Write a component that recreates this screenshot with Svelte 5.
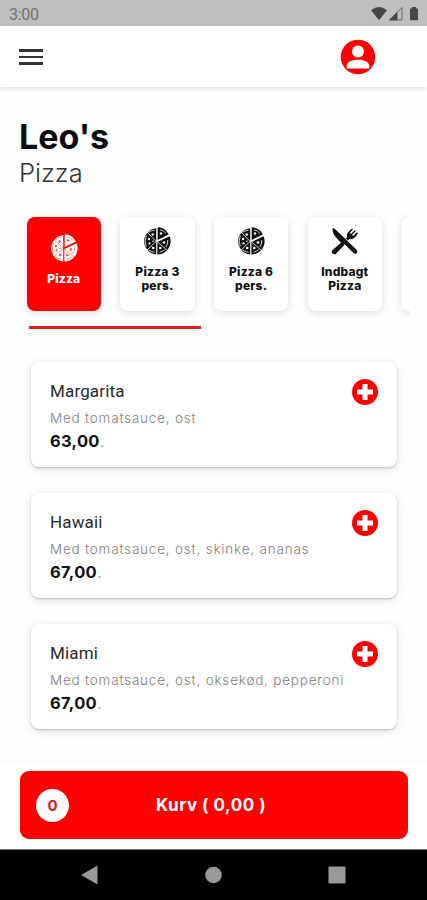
<script>
  const tabs = [
    { lines: ['Pizza'], icon: 'pizza', active: true },
    { lines: ['Pizza 3', 'pers.'], icon: 'pizza' },
    { lines: ['Pizza 6', 'pers.'], icon: 'pizza' },
    { lines: ['Indbagt', 'Pizza'], icon: 'cutlery' },
    { lines: [], icon: 'none' }
  ];
  const items = [
    { name: 'Margarita', text: 'Med tomatsauce, ost', price: '63,00' },
    { name: 'Hawaii', text: 'Med tomatsauce, ost, skinke, ananas', price: '67,00' },
    { name: 'Miami', text: 'Med tomatsauce, ost, oksekød, pepperoni', price: '67,00' }
  ];
</script>

<div class="screen">
  <div class="status">
    <span class="clock">3:00</span>
    <svg width="50" height="16" viewBox="0 0 50 16">
      <path d="M1 4.200Q9 -2.400 17 4.200L9 14.200Z" fill="#474747" />
      <path d="M19.500 14L32 1.500V14Z" fill="none" stroke="#666" stroke-width="1" />
      <path d="M19 14.300L27.500 5.800V14.300Z" fill="#474747" />
      <path d="M40 2.500H42V1H46V2.500H48V14.300H40Z" fill="#474747" />
    </svg>
  </div>

  <header>
    <div class="menu"><i></i><i></i><i></i></div>
    <svg class="user" width="36" height="36" viewBox="0 0 36 36">
      <circle cx="18" cy="18" r="17.3" fill="#f00" />
      <circle cx="18" cy="12.500" r="6" fill="#fff" />
      <path d="M6.700 29.500V26.500C7.500 22.200 13 20.700 18 20.700S28.500 22.200 29.300 26.500V29.500Z" fill="#fff" />
    </svg>
  </header>

  <main>
    <h1>Leo's</h1>
    <h2>Pizza</h2>

    <div class="tabs">
      {#each tabs as tab}
        <div class="tab" class:active={tab.active}>
          {#if tab.icon === 'pizza'}
            <svg width="28" height="28" viewBox="0 0 28 28">
              <g fill="currentColor">
                <path d="M13.200 1.200A13.200 13.200 0 0 0 13.200 27.500Z" />
                <path d="M14.400 15L26.600 9.200A13.200 13.200 0 0 1 14.400 27.500Z" />
                <path d="M14.700 13V.3A13.200 13.200 0 0 1 25.800 7.500Z" />
              </g>
              <g class="cut" fill="none">
                <path d="M13 14.300L4 5M13 14.500L3.500 23.500M14.500 15L24 23M3.400 8.500Q1 14 3.200 19.500M5.500 5.300Q8 3.500 11.500 3.200M5.500 23Q8 25 11.500 25.200M24.800 13Q25 17 23 20M16.500 25.300Q19.500 24.500 21.500 22.800M17 2.800Q21 3.500 23 6.500" />
              </g>
              <g class="dots">
                <circle cx="9.700" cy="7.500" r="1.200" /><circle cx="6" cy="12" r="1.200" />
                <circle cx="6.500" cy="16.400" r="1.100" /><circle cx="10.200" cy="21" r="1.300" />
                <circle cx="21" cy="15.500" r="1.300" /><circle cx="17.300" cy="21" r="1.300" />
                <circle cx="18" cy="6.500" r="1.200" /><circle cx="10" cy="14.200" r=".8" />
              </g>
            </svg>
          {:else if tab.icon === 'cutlery'}
            <svg width="28" height="28" viewBox="0 0 28 28" fill="currentColor">
              <path d="M1.500 2.500C1 1 2.500 .8 4 2L15 12.500L17 14.500L26 23.300Q27 25 25.500 26.300Q24 27.500 22.500 26L14 17.500H11.500L3 8Q1.500 5 1.500 2.500Z" />
              <path d="M1.300 23.300L10.500 15.200L13.300 18L5 26.700Q3.300 28.200 1.600 26.600Q0 25 1.300 23.300Z" />
              <path d="M14.800 11.500L16.200 10C15 7 17.500 4.500 21 1.500L22 2.300L18.800 6L20 7L23.700 3L24.700 4L21 7.900L22.200 9L26 5.200L27 6.200C24.500 10.500 21.500 12.800 18.500 12L17 13.500Z" />
            </svg>
          {/if}
          <div class="label">
            {#each tab.lines as line}<div>{line}</div>{/each}
          </div>
        </div>
      {/each}
    </div>
    <div class="indicator"></div>

    <div class="list">
      {#each items as item}
        <article>
          <div class="info">
            <h3>{item.name}</h3>
            <p>{item.text}</p>
            <div class="price"><b>{item.price}</b>.</div>
          </div>
          <svg class="add" width="26" height="26" viewBox="0 0 26 26">
            <circle cx="13" cy="13" r="13" fill="#f00" />
            <path d="M13 5V21M5 13H21" stroke="#fff" stroke-width="5" />
          </svg>
        </article>
      {/each}
    </div>
  </main>

  <footer>
    <div class="cart">
      <span class="count">0</span>
      <span class="total">Kurv ( 0,00 )</span>
    </div>
  </footer>

  <nav>
    <svg width="17" height="20" viewBox="0 0 17 20"><path d="M0 10L16.500 .5V19.500Z" fill="#999" /></svg>
    <svg width="18" height="18" viewBox="0 0 18 18"><circle cx="9.500" cy="9" r="8.300" fill="#999" /></svg>
    <svg width="18" height="18" viewBox="0 0 18 18"><rect x=".5" y=".5" width="17" height="17" rx="1" fill="#999" /></svg>
  </nav>
</div>

<style>
  :global(body) { background: #fff; }
  .screen {
    width: 427px; height: 900px; overflow: hidden; background: #fefefe;
    display: flex; flex-direction: column; font-family: Inter, sans-serif; color: #111;
  }
  .screen * { box-sizing: border-box; }
  .status {
    height: 26px; flex: none; background: #bfbfbf; display: flex;
    justify-content: space-between; padding: 6px 7px 0 9px;
  }
  .clock { font: 16px/17px Roboto, sans-serif; color: #707070; letter-spacing: -0.3px; }
  header {
    height: 61px; flex: none; background: #fff; box-shadow: 0 2px 5px rgba(0, 0, 0, .12);
    display: flex; justify-content: space-between; align-items: center; padding: 0 51px 0 19px;
  }
  .menu { width: 24px; display: flex; flex-direction: column; gap: 4px; padding-top: 1px; }
  .menu i { height: 2.600px; background: #333; }
  .user { display: block; }
  main { flex: 1; min-height: 0; padding: 31px 17px 0 19px; }
  h1 { margin: 0; font-size: 34px; line-height: 37px; font-weight: 700; color: #0b0b0b; }
  h2 { margin: 0; font-size: 25.500px; line-height: 35px; font-weight: 300; color: #333; height: 34px; }
  .tabs { display: flex; gap: 19.200px; overflow: hidden; padding: 28px 0 15px 7.500px; }
  .tab {
    flex: none; width: 74.500px; height: 94px; border-radius: 8px; background: #fff;
    box-shadow: 0 2px 8px rgba(0, 0, 0, .13); display: flex; flex-direction: column; align-items: center;
    padding-top: 10px; color: #111; --paper: #fff;
  }
  .tab.active { background: #f00; color: #fff; --paper: #f00; padding-top: 17px; }
  .tab svg { display: block; }
  .cut { stroke: var(--paper); stroke-width: .8; }
  .active .cut { stroke-width: .45; }
  .dots { fill: var(--paper); }
  .active .dots { opacity: .7; }
  .label { margin-top: 10px; font-size: 12px; line-height: 14px; font-weight: 800; text-align: center; white-space: nowrap; letter-spacing: .2px; }
  .indicator { width: 172px; height: 2.500px; background: #e91c1c; margin-left: 10px; }
  .list { display: flex; flex-direction: column; gap: 26px; padding: 33.200px 13px 0 12px; }
  article {
    height: 105.200px; border-radius: 8px; background: #fff; display: flex; justify-content: space-between;
    padding: 17px 19px 0 19px; box-shadow: 0 1px 2px rgba(0, 0, 0, .2), 0 2px 10px rgba(0, 0, 0, .12);
  }
  .info { white-space: nowrap; width: 0; }
  h3 { margin: 0; font: 400 17px/25px Roboto, sans-serif; letter-spacing: .15px; color: #2a2a2a; }
  p { margin: 2px 0 0; font-size: 13.500px; line-height: 24px; font-weight: 300; color: #808080; letter-spacing: .8px; }
  .price { font-size: 16.500px; line-height: 22px; color: #888; font-weight: 300; }
  .price b { font-weight: 700; color: #111; letter-spacing: .3px; }
  .add { display: block; flex: none; }
  footer { height: 86px; flex: none; background: #fff; padding: 8px 19px 0 20px; box-shadow: 0 -1px 3px rgba(0, 0, 0, .03); }
  .cart { height: 68px; border-radius: 9px; background: #f00; display: grid; grid-template-columns: 50px 1fr 72px; align-items: center; padding-left: 16px; }
  .count {
    width: 33px; height: 33px; border-radius: 50%; background: #fff; color: #d51a1a;
    font-size: 15px; font-weight: 700; line-height: 34px; text-align: center;
  }
  .total { color: #fff; font-weight: 700; font-size: 17px; text-align: center; white-space: nowrap; letter-spacing: .5px; }
  nav {
    height: 51px; flex: none; background: #000; border-top: 1px solid #777;
    display: flex; align-items: center; justify-content: space-between; padding: 0 81px 1px;
  }
</style>
